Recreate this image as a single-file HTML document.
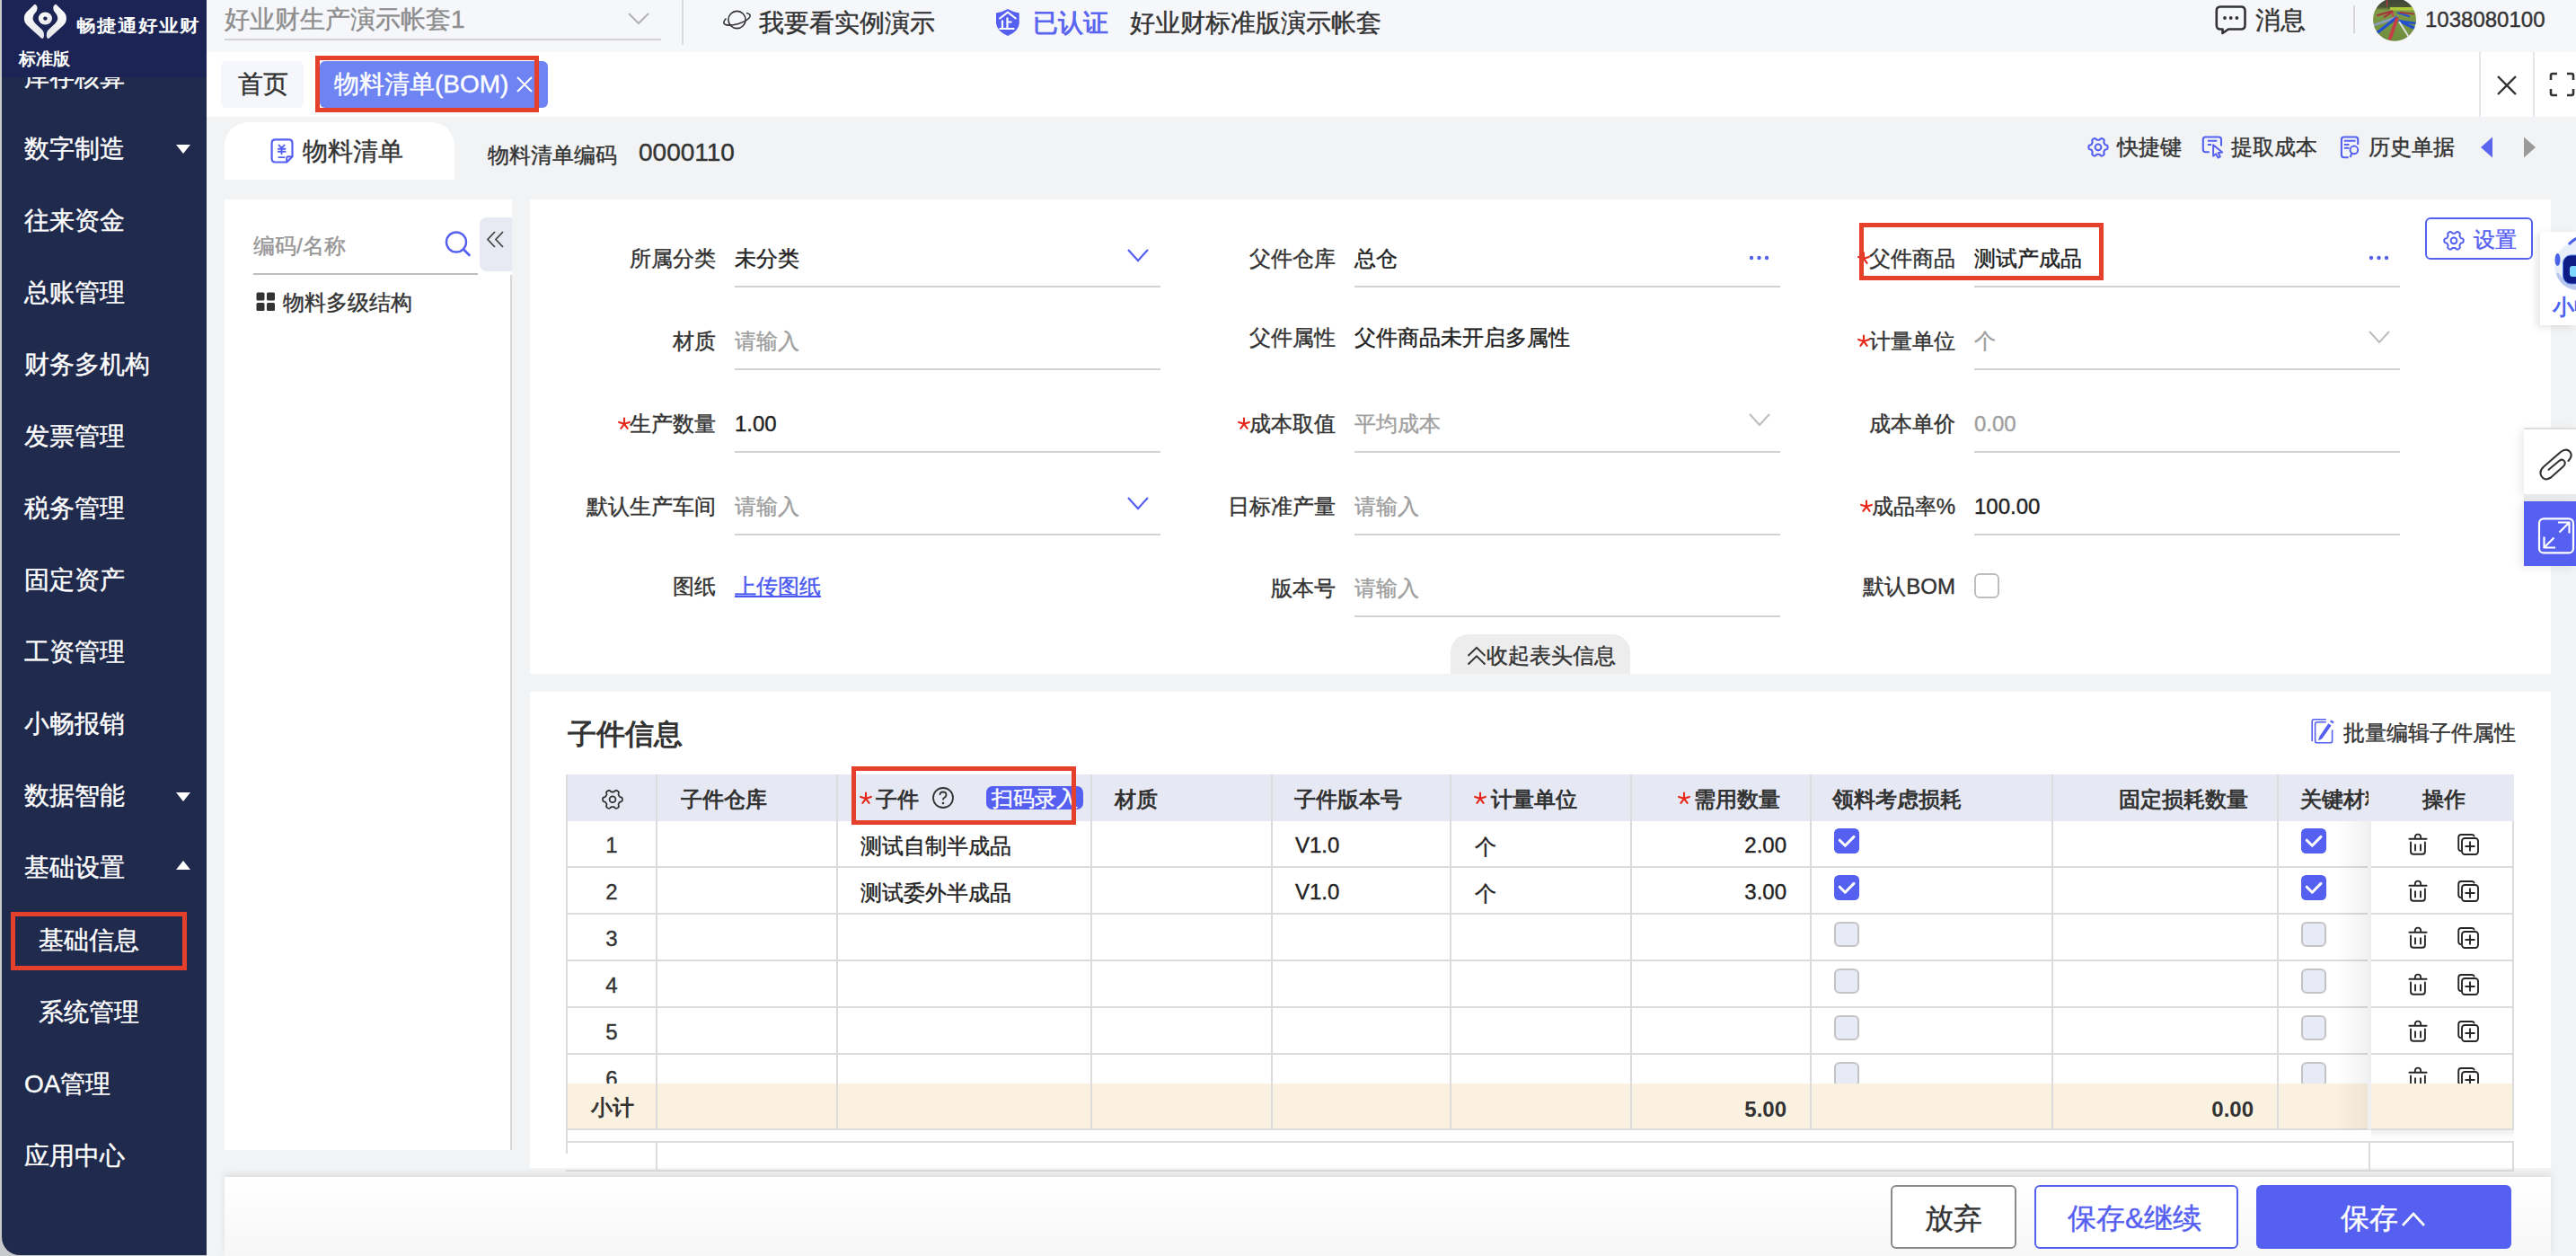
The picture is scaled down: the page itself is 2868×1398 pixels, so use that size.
<!DOCTYPE html>
<html><head><meta charset="utf-8">
<style>
*{box-sizing:border-box}
html,body{margin:0;padding:0}
body{width:2868px;height:1398px;position:relative;overflow:hidden;background:#F2F3F5;font-family:"Liberation Sans",sans-serif;color:#333;font-weight:500;-webkit-text-stroke:0.4px currentColor}
.a{position:absolute}
.t{position:absolute;white-space:nowrap;line-height:1}
.f24{font-size:24px}
[style*="font-weight:bold"]{-webkit-text-stroke:0}.f28{font-size:28px}.f32{font-size:32px}
#side{left:2px;top:0;width:228px;height:1397px;background:#1F2A4D;border-bottom-left-radius:20px;overflow:hidden}
#sidebg{left:0;top:0;width:230px;height:1398px;background:#C9CACC}
#side .m{position:absolute;left:25px;color:#fff;font-size:28px;line-height:1;white-space:nowrap}
.tri-d{position:absolute;left:194px;width:0;height:0;border-left:8px solid transparent;border-right:8px solid transparent;border-top:10px solid #fff}
.tri-u{position:absolute;left:194px;width:0;height:0;border-left:8px solid transparent;border-right:8px solid transparent;border-bottom:10px solid #fff}
.red{position:absolute;border:5px solid #E5402B}
.lbl{position:absolute;font-size:24px;line-height:1;white-space:nowrap;text-align:right;color:#333}
.req{color:#E8352B}
.st{display:inline-block;vertical-align:top;position:relative;top:4px;margin-right:-2px}
.ul{position:absolute;height:2px;background:#D2D2D2}
.ph{color:#A0A0A0}
.hd{position:absolute;top:878px;font-size:24px;line-height:1;font-weight:bold;color:#333;white-space:nowrap;-webkit-text-stroke:0}
.vl{position:absolute;width:2px;background:#DCDCDC}
.hl{position:absolute;height:2px;background:#DCDCDC}
.cb{position:absolute;width:28px;height:28px;border-radius:6px}
.cbon{background:#5661F2}
.cboff{background:#E8EBF5;border:2px solid #C4C4C8}
</style></head><body>

<!-- SIDEBAR -->
<div id="sidebg" class="a"></div>
<div id="side" class="a">
  <div class="m" style="top:72px">库存核算</div>
  <div class="a" style="left:0;top:0;width:228px;height:86px;background:#1B2454"></div>
  
<svg class="a" style="left:18px;top:0" width="60" height="50" viewBox="0 0 60 50">
 <defs><linearGradient id="lg" x1="0" y1="0" x2="1" y2="1"><stop offset="0" stop-color="#fff"/><stop offset="1" stop-color="#E4E4E8"/></linearGradient></defs>
 <path fill="url(#lg)" d="M18.5 4.8 L9 14 Q6.5 17 6.8 21 Q7 25 10 28 L26 42.5 Q28 43.8 28.8 41 Q29.6 36 27 33.3 L19.2 26 Q16.5 23.2 16.5 20.5 Q16.5 17 19 14.5 Q21.6 12 21.6 9 Q21.2 5.2 18.5 4.8 Z"/>
 <path fill="url(#lg)" transform="translate(60.8,0) scale(-1,1)" d="M18.5 4.8 L9 14 Q6.5 17 6.8 21 Q7 25 10 28 L26 42.5 Q28 43.8 28.8 41 Q29.6 36 27 33.3 L19.2 26 Q16.5 23.2 16.5 20.5 Q16.5 17 19 14.5 Q21.6 12 21.6 9 Q21.2 5.2 18.5 4.8 Z"/>
 <ellipse cx="30.4" cy="20.5" rx="7.6" ry="7.1" fill="url(#lg)"/>
 <circle cx="30.4" cy="20.6" r="2.2" fill="#1B2353"/>
</svg>
<div class="t" style="left:83px;top:19px;font-size:22px;letter-spacing:1px;font-weight:bold;color:#fff;transform:scaleY(0.88);transform-origin:0 0">畅捷通好业财</div>
<div class="t" style="left:19px;top:56px;font-size:19px;font-weight:bold;color:#fff">标准版</div>
<div class="m" style="top:152px">数字制造</div><div class="tri-d" style="top:161px"></div>
  <div class="m" style="top:232px">往来资金</div>
  <div class="m" style="top:312px">总账管理</div>
  <div class="m" style="top:392px">财务多机构</div>
  <div class="m" style="top:472px">发票管理</div>
  <div class="m" style="top:552px">税务管理</div>
  <div class="m" style="top:632px">固定资产</div>
  <div class="m" style="top:712px">工资管理</div>
  <div class="m" style="top:792px">小畅报销</div>
  <div class="m" style="top:872px">数据智能</div><div class="tri-d" style="top:882px"></div>
  <div class="m" style="top:952px">基础设置</div><div class="tri-u" style="top:958px"></div>
  <div class="m" style="top:1033px;left:41px">基础信息</div>
  <div class="m" style="top:1113px;left:41px">系统管理</div>
  <div class="m" style="top:1193px">OA管理</div>
  <div class="m" style="top:1273px">应用中心</div>
</div>
<div class="red" style="left:12px;top:1015px;width:196px;height:65px"></div>

<!-- TOPBAR -->
<div class="a" style="left:230px;top:0;width:2638px;height:58px;background:#F6F7FB"></div>
<div class="a" style="left:230px;top:58px;width:2638px;height:72px;background:#fff"></div>


<!-- topbar content -->
<div class="t f28" style="left:250px;top:8px;color:#8E8E8E">好业财生产演示帐套1</div>
<div class="a" style="left:250px;top:43px;width:486px;height:2px;background:#D4D4D6"></div>
<svg class="a" style="left:698px;top:12px" width="28" height="18"><polyline points="2,3 13,14 24,3" fill="none" stroke="#B4B4B4" stroke-width="2"/></svg>
<div class="a" style="left:759px;top:0;width:2px;height:50px;background:#DCDCDE"></div>
<svg class="a" style="left:800px;top:5px" width="40" height="34" viewBox="0 0 40 34">
 <circle cx="20.5" cy="17" r="9.6" fill="none" stroke="#333" stroke-width="1.6"/>
 <path d="M8.5 15.5 Q4 20 7 22 Q11 24.5 22 21.5 Q33 18 35 13.5 Q36 10.5 31 9.5" fill="none" stroke="#333" stroke-width="1.6"/>
</svg>
<div class="t f28" style="left:845px;top:12px;color:#333">我要看实例演示</div>
<svg class="a" style="left:1108px;top:9px" width="28" height="32" viewBox="0 0 28 32">
 <path d="M14 1 Q8 4.5 1 5.6 L1 17 Q2 26 14 31 Q26 26 26.8 17 L26.8 5.6 Q20 4.5 14 1 Z" fill="#5560F0"/>
 <path d="M4.5 12 L14 4.6 L23.5 12" fill="none" stroke="#fff" stroke-width="2"/>
 <path d="M8 13.5 V23 M13.5 10.5 V23 M13.5 15.5 H18.5 M4.5 23 H21.5" fill="none" stroke="#fff" stroke-width="2.2"/>
</svg>
<div class="t f28" style="left:1150px;top:12px;color:#5A66F0;font-weight:bold">已认证</div>
<div class="t f28" style="left:1258px;top:12px;color:#333">好业财标准版演示帐套</div>
<svg class="a" style="left:2466px;top:5px" width="36" height="34" viewBox="0 0 36 34">
 <path d="M6 2.5 H29 Q33.5 2.5 33.5 7 V23 Q33.5 27.5 29 27.5 H15 L8.5 32 L8.5 27.5 H6 Q1.8 27.5 1.8 23 V7 Q1.8 2.5 6 2.5 Z" fill="none" stroke="#333" stroke-width="2.6" stroke-linejoin="round"/>
 <circle cx="11" cy="15" r="1.9" fill="#333"/><circle cx="17.7" cy="15" r="1.9" fill="#333"/><circle cx="24.4" cy="15" r="1.9" fill="#333"/>
</svg>
<div class="t f28" style="left:2511px;top:9px;color:#333">消息</div>
<div class="a" style="left:2620px;top:6px;width:2px;height:31px;background:#D8D8DA"></div>
<svg class="a" style="left:2642px;top:-2px" width="48" height="48" viewBox="0 0 48 48">
 <defs><clipPath id="av"><circle cx="24" cy="23.8" r="24"/></clipPath>
 <linearGradient id="gr" x1="0" y1="0" x2="0" y2="1"><stop offset="0" stop-color="#3E4436"/><stop offset="0.2" stop-color="#4A5236"/><stop offset="0.28" stop-color="#7E9A45"/><stop offset="1" stop-color="#6F8C3E"/></linearGradient></defs>
 <g clip-path="url(#av)">
  <rect width="48" height="48" fill="url(#gr)"/>
  <rect x="19" y="10" width="26" height="3.5" fill="#B7D63A" opacity="0.85"/>
  <path d="M15.5 0 V9" stroke="#B23A3A" stroke-width="1.5"/>
  <path d="M27 21 L1 30" stroke="#8C9CC4" stroke-width="2.6"/>
  <path d="M27 21 L4 39" stroke="#2450D0" stroke-width="3.4"/>
  <path d="M21.9 14.2 L4.4 19.3" stroke="#A8303C" stroke-width="2"/>
  <path d="M22 14.8 L11.9 21.5" stroke="#A8303C" stroke-width="2"/>
  <path d="M27 16 L41 20.5" stroke="#2A55D0" stroke-width="2.2"/>
  <path d="M29.5 15.8 L46 17.6" stroke="#A8303C" stroke-width="1.8"/>
  <path d="M28.7 25.3 L47.8 28" stroke="#2450D0" stroke-width="2.4"/>
  <path d="M28.7 25 L46.5 33.5" stroke="#2450D0" stroke-width="3.2"/>
  <path d="M29 26 L39.5 42.5" stroke="#E2E2E2" stroke-width="2"/>
  <path d="M21.5 15 L22.5 21" stroke="#C8404A" stroke-width="1.6"/>
  <path d="M27 21.5 L18.5 46" stroke="#C83A44" stroke-width="3.6"/>
 </g>
</svg>
<div class="t f24" style="left:2700px;top:10px;color:#333">1038080100</div>

<!-- tabbar -->
<div class="a" style="left:246px;top:68px;width:92px;height:52px;background:#F5F7FC;border-radius:6px"></div>
<div class="t f28" style="left:265px;top:80px;color:#333">首页</div>
<div class="a" style="left:356px;top:68px;width:254px;height:52px;background:#6E84F3;border-radius:6px"></div>
<div class="t f28" style="left:372px;top:80px;color:#fff">物料清单(BOM)</div>
<svg class="a" style="left:574px;top:84px" width="20" height="20"><path d="M2 2 L18 18 M18 2 L2 18" stroke="#fff" stroke-width="2"/></svg>
<div class="red" style="left:351px;top:62px;width:249px;height:63px"></div>
<div class="a" style="left:2760px;top:58px;width:2px;height:72px;background:#E6E6E8"></div>
<svg class="a" style="left:2778px;top:83px" width="26" height="24"><path d="M3 2 L23 22 M23 2 L3 22" stroke="#333" stroke-width="2.4"/></svg>
<div class="a" style="left:2820px;top:58px;width:2px;height:72px;background:#E6E6E8"></div>
<svg class="a" style="left:2838px;top:80px" width="30" height="28"><path d="M2 9 V4 Q2 2 4 2 H9 M20 2 H25 Q27 2 27 4 V9 M27 19 V24 Q27 26 25 26 H20 M9 26 H4 Q2 26 2 24 V19" fill="none" stroke="#333" stroke-width="2.6"/></svg>


<!-- title row -->
<div class="a" style="left:250px;top:136px;width:256px;height:64px;background:#fff;border-radius:26px 26px 0 0"></div>
<svg class="a" style="left:300px;top:153px" width="28" height="30" viewBox="0 0 28 30">
 <path d="M6.6 2.4 H21.5 Q25.5 2.4 25.5 6.4 V21.2 L19.3 27.5 H6.6 Q2.6 27.5 2.6 23.5 V6.4 Q2.6 2.4 6.6 2.4 Z" fill="none" stroke="#5560F0" stroke-width="2.2" stroke-linejoin="round"/>
 <path d="M19.2 27.3 V23.2 Q19.2 21.3 21.1 21.3 H25.3" fill="none" stroke="#5560F0" stroke-width="2"/>
 <path d="M10.6 8.6 L13.5 11.6 L16.6 8.6 M13.5 11.6 V18.2 M9.8 12.8 H17.6 M9.8 15.7 H17.6 M10.3 22.1 H16.6" fill="none" stroke="#5560F0" stroke-width="1.9" stroke-linecap="round"/>
</svg>
<div class="t f28" style="left:337px;top:155px;color:#333">物料清单</div>
<div class="t f24" style="left:543px;top:161px;color:#333">物料清单编码</div>
<div class="t f28" style="left:711px;top:156px;color:#333">0000110</div>

<svg class="a" style="left:2322px;top:151px" width="28" height="26" viewBox="0 0 28 26"><path d="M24.60 12.80 L24.58 13.35 L24.50 13.90 L24.32 14.43 L23.87 14.90 L22.98 15.21 L22.10 15.43 L21.61 15.72 L21.35 16.07 L21.13 16.44 L20.93 16.80 L20.72 17.16 L20.51 17.53 L20.34 17.93 L20.33 18.50 L20.58 19.38 L20.75 20.30 L20.57 20.92 L20.21 21.34 L19.77 21.68 L19.30 21.98 L18.81 22.24 L18.29 22.45 L17.74 22.55 L17.12 22.39 L16.41 21.78 L15.77 21.13 L15.28 20.85 L14.84 20.80 L14.42 20.80 L14.00 20.80 L13.58 20.80 L13.16 20.80 L12.72 20.85 L12.23 21.13 L11.59 21.78 L10.88 22.39 L10.26 22.55 L9.71 22.45 L9.19 22.24 L8.70 21.98 L8.23 21.68 L7.79 21.34 L7.43 20.92 L7.25 20.30 L7.42 19.38 L7.67 18.50 L7.66 17.93 L7.49 17.53 L7.28 17.16 L7.07 16.80 L6.87 16.44 L6.65 16.07 L6.39 15.72 L5.90 15.43 L5.02 15.21 L4.13 14.90 L3.68 14.43 L3.50 13.90 L3.42 13.35 L3.40 12.80 L3.42 12.25 L3.50 11.70 L3.68 11.17 L4.13 10.70 L5.02 10.39 L5.90 10.17 L6.39 9.88 L6.65 9.53 L6.87 9.16 L7.07 8.80 L7.28 8.44 L7.49 8.07 L7.66 7.67 L7.67 7.10 L7.42 6.22 L7.25 5.30 L7.43 4.68 L7.79 4.26 L8.23 3.92 L8.70 3.62 L9.19 3.36 L9.71 3.15 L10.26 3.05 L10.88 3.21 L11.59 3.82 L12.23 4.47 L12.72 4.75 L13.16 4.80 L13.58 4.80 L14.00 4.80 L14.42 4.80 L14.84 4.80 L15.28 4.75 L15.77 4.47 L16.41 3.82 L17.12 3.21 L17.74 3.05 L18.29 3.15 L18.81 3.36 L19.30 3.62 L19.77 3.92 L20.21 4.26 L20.57 4.68 L20.75 5.30 L20.58 6.22 L20.33 7.10 L20.34 7.67 L20.51 8.07 L20.72 8.44 L20.93 8.80 L21.13 9.16 L21.35 9.53 L21.61 9.88 L22.10 10.17 L22.98 10.39 L23.87 10.70 L24.32 11.17 L24.50 11.70 L24.58 12.25 Z" fill="none" stroke="#5560F0" stroke-width="2.1" stroke-linejoin="round"/><circle cx="14" cy="12.8" r="3.4" fill="none" stroke="#5560F0" stroke-width="2"/></svg>
<div class="t f24" style="left:2357px;top:152px;color:#333">快捷键</div>
<svg class="a" style="left:2450px;top:151px" width="28" height="28" viewBox="0 0 28 28">
 <path d="M9.8 18.2 H5.5 Q2.8 18.2 2.8 15.5 V4.2 Q2.8 1.5 5.5 1.5 H20.3 Q23 1.5 23 4.2 V11.5" fill="none" stroke="#5560F0" stroke-width="2.1"/>
 <path d="M7.9 5.8 H18.3 M7.9 10 H12" stroke="#5560F0" stroke-width="2"/>
 <path d="M14.1 10.2 L14.1 22.8 L17.2 20.2 L19.5 24.6 L21.9 23.4 L19.7 19 L24.2 18.6 Z" fill="none" stroke="#5560F0" stroke-width="1.9" stroke-linejoin="round"/>
</svg>
<div class="t f24" style="left:2484px;top:152px;color:#333">提取成本</div>
<svg class="a" style="left:2603px;top:151px" width="28" height="28" viewBox="0 0 28 28">
 <path d="M11.7 24.2 H6.6 Q3.9 24.2 3.9 21.5 V4.2 Q3.9 1.5 6.6 1.5 H19.5 Q22.2 1.5 22.2 4.2 V10" fill="none" stroke="#5560F0" stroke-width="2.1"/>
 <path d="M6.8 5.8 H19.5 M6.8 10 H12.5 M6.8 13.8 H12.5" stroke="#5560F0" stroke-width="2"/>
 <circle cx="17.9" cy="15.9" r="4.3" fill="none" stroke="#5560F0" stroke-width="2"/>
 <path d="M15.4 19.6 L13.6 24" stroke="#5560F0" stroke-width="2.1"/>
</svg>
<div class="t f24" style="left:2637px;top:152px;color:#333">历史单据</div>
<svg class="a" style="left:2760px;top:151px" width="18" height="26"><path d="M15 1.5 V24.5 L2 13 Z" fill="#5A66F0"/></svg>
<svg class="a" style="left:2808px;top:151px" width="18" height="26"><path d="M2 1.5 V24.5 L15 13 Z" fill="#9A9A9A"/></svg>

<!-- tree panel -->
<div class="a" style="left:250px;top:222px;width:320px;height:1058px;background:#fff"></div>
<div class="t f24" style="left:282px;top:262px;color:#969696">编码/名称</div>
<svg class="a" style="left:494px;top:256px" width="32" height="32" viewBox="0 0 32 32">
 <circle cx="14" cy="13.5" r="11" fill="none" stroke="#5560F0" stroke-width="2.4"/>
 <path d="M22 21.5 L28.5 28" stroke="#5560F0" stroke-width="2.6" stroke-linecap="round"/>
</svg>
<div class="a" style="left:282px;top:304px;width:250px;height:2px;background:#BDBDBD"></div>
<div class="a" style="left:534px;top:242px;width:36px;height:60px;background:#E8EAF3;border-radius:8px 0 0 8px"></div>
<svg class="a" style="left:540px;top:255px" width="24" height="26" viewBox="0 0 24 26">
 <path d="M11 3 L3 11.5 L11 20 M20 3 L12 11.5 L20 20" fill="none" stroke="#444" stroke-width="1.8"/>
</svg>
<div class="a" style="left:568px;top:306px;width:2px;height:974px;background:#D8D8D8"></div>
<svg class="a" style="left:285px;top:325px" width="22" height="22"><rect x="0.5" y="0.5" width="9" height="9" rx="1.5" fill="#333"/><rect x="12" y="0.5" width="9" height="9" rx="1.5" fill="#333"/><rect x="0.5" y="12" width="9" height="9" rx="1.5" fill="#333"/><rect x="12" y="12" width="9" height="9" rx="1.5" fill="#333"/></svg>
<div class="t f24" style="left:315px;top:325px;color:#333">物料多级结构</div>

<!-- form panel -->
<div class="a" style="left:590px;top:222px;width:2250px;height:528px;background:#fff"></div>
<div class="lbl" style="right:2071px;top:276px">所属分类</div>
<div class="t f24" style="left:818px;top:276px;color:#222">未分类</div>
<div class="ul" style="left:818px;top:318px;width:474px"></div>
<svg class="a" style="left:1254px;top:276px" width="28" height="18"><polyline points="2,2 13,14 24,2" fill="none" stroke="#5560F0" stroke-width="2.2"/></svg>
<div class="lbl" style="right:2071px;top:368px">材质</div>
<div class="t f24 ph" style="left:818px;top:368px">请输入</div>
<div class="ul" style="left:818px;top:410px;width:474px"></div>
<div class="lbl" style="right:2071px;top:460px"><svg class="st" width="16" height="16" viewBox="0 0 16 16"><path d="M8.00 7.80 L8.00 1.60 M8.00 7.80 L13.90 5.88 M8.00 7.80 L11.64 12.82 M8.00 7.80 L4.36 12.82 M8.00 7.80 L2.10 5.88 " stroke="#E8271A" stroke-width="2.1" stroke-linecap="round"/></svg>生产数量</div>
<div class="t f24" style="left:818px;top:460px;color:#222">1.00</div>
<div class="ul" style="left:818px;top:502px;width:474px"></div>
<div class="lbl" style="right:2071px;top:552px">默认生产车间</div>
<div class="t f24 ph" style="left:818px;top:552px">请输入</div>
<div class="ul" style="left:818px;top:594px;width:474px"></div>
<svg class="a" style="left:1254px;top:552px" width="28" height="18"><polyline points="2,2 13,14 24,2" fill="none" stroke="#5560F0" stroke-width="2.2"/></svg>
<div class="lbl" style="right:2071px;top:641px">图纸</div>
<div class="t f24" style="left:818px;top:641px;color:#4A5AF0;text-decoration:underline">上传图纸</div>
<div class="lbl" style="right:1381px;top:276px">父件仓库</div>
<div class="t f24" style="left:1508px;top:276px;color:#222">总仓</div>
<div class="ul" style="left:1508px;top:318px;width:474px"></div>
<svg class="a" style="left:1947px;top:283px" width="26" height="8"><circle cx="3" cy="4" r="2.2" fill="#5560F0"/><circle cx="11.5" cy="4" r="2.2" fill="#5560F0"/><circle cx="20" cy="4" r="2.2" fill="#5560F0"/></svg>
<div class="lbl" style="right:1381px;top:364px">父件属性</div>
<div class="t f24" style="left:1508px;top:364px;color:#222">父件商品未开启多属性</div>
<div class="lbl" style="right:1381px;top:460px"><svg class="st" width="16" height="16" viewBox="0 0 16 16"><path d="M8.00 7.80 L8.00 1.60 M8.00 7.80 L13.90 5.88 M8.00 7.80 L11.64 12.82 M8.00 7.80 L4.36 12.82 M8.00 7.80 L2.10 5.88 " stroke="#E8271A" stroke-width="2.1" stroke-linecap="round"/></svg>成本取值</div>
<div class="t f24 ph" style="left:1508px;top:460px">平均成本</div>
<div class="ul" style="left:1508px;top:502px;width:474px"></div>
<svg class="a" style="left:1946px;top:459px" width="28" height="18"><polyline points="2,2 13,14 24,2" fill="none" stroke="#BDBDBD" stroke-width="2"/></svg>
<div class="lbl" style="right:1381px;top:552px">日标准产量</div>
<div class="t f24 ph" style="left:1508px;top:552px">请输入</div>
<div class="ul" style="left:1508px;top:594px;width:474px"></div>
<div class="lbl" style="right:1381px;top:643px">版本号</div>
<div class="t f24 ph" style="left:1508px;top:643px">请输入</div>
<div class="ul" style="left:1508px;top:685px;width:474px"></div>
<div class="lbl" style="right:691px;top:276px"><svg class="st" width="16" height="16" viewBox="0 0 16 16"><path d="M8.00 7.80 L8.00 1.60 M8.00 7.80 L13.90 5.88 M8.00 7.80 L11.64 12.82 M8.00 7.80 L4.36 12.82 M8.00 7.80 L2.10 5.88 " stroke="#E8271A" stroke-width="2.1" stroke-linecap="round"/></svg>父件商品</div>
<div class="t f24" style="left:2198px;top:276px;color:#222">测试产成品</div>
<div class="ul" style="left:2198px;top:318px;width:474px"></div>
<svg class="a" style="left:2637px;top:283px" width="26" height="8"><circle cx="3" cy="4" r="2.2" fill="#5560F0"/><circle cx="11.5" cy="4" r="2.2" fill="#5560F0"/><circle cx="20" cy="4" r="2.2" fill="#5560F0"/></svg>
<div class="lbl" style="right:691px;top:368px"><svg class="st" width="16" height="16" viewBox="0 0 16 16"><path d="M8.00 7.80 L8.00 1.60 M8.00 7.80 L13.90 5.88 M8.00 7.80 L11.64 12.82 M8.00 7.80 L4.36 12.82 M8.00 7.80 L2.10 5.88 " stroke="#E8271A" stroke-width="2.1" stroke-linecap="round"/></svg>计量单位</div>
<div class="t f24 ph" style="left:2198px;top:368px">个</div>
<div class="ul" style="left:2198px;top:410px;width:474px"></div>
<svg class="a" style="left:2636px;top:367px" width="28" height="18"><polyline points="2,2 13,14 24,2" fill="none" stroke="#BDBDBD" stroke-width="2"/></svg>
<div class="lbl" style="right:691px;top:460px">成本单价</div>
<div class="t f24 ph" style="left:2198px;top:460px">0.00</div>
<div class="ul" style="left:2198px;top:502px;width:474px"></div>
<div class="lbl" style="right:691px;top:552px"><svg class="st" width="16" height="16" viewBox="0 0 16 16"><path d="M8.00 7.80 L8.00 1.60 M8.00 7.80 L13.90 5.88 M8.00 7.80 L11.64 12.82 M8.00 7.80 L4.36 12.82 M8.00 7.80 L2.10 5.88 " stroke="#E8271A" stroke-width="2.1" stroke-linecap="round"/></svg>成品率%</div>
<div class="t f24" style="left:2198px;top:552px;color:#222">100.00</div>
<div class="ul" style="left:2198px;top:594px;width:474px"></div>
<div class="lbl" style="right:691px;top:641px">默认BOM</div>
<div class="cb" style="left:2198px;top:638px;background:#fff;border:2px solid #BDBDBD"></div>

<div class="red" style="left:2070px;top:248px;width:272px;height:64px"></div>
<div class="a" style="left:2700px;top:242px;width:120px;height:47px;border:2px solid #5560F0;border-radius:6px;background:#fff"></div>
<svg class="a" style="left:2718px;top:254px" width="28" height="28" viewBox="0 0 28 28"><path d="M24.70 13.80 L24.68 14.36 L24.60 14.91 L24.42 15.45 L23.97 15.92 L23.08 16.23 L22.19 16.46 L21.71 16.76 L21.44 17.11 L21.22 17.48 L21.01 17.85 L20.80 18.22 L20.59 18.59 L20.41 18.99 L20.40 19.56 L20.65 20.45 L20.82 21.37 L20.64 22.00 L20.26 22.42 L19.82 22.77 L19.35 23.07 L18.85 23.33 L18.34 23.54 L17.78 23.65 L17.15 23.49 L16.43 22.88 L15.79 22.22 L15.29 21.95 L14.85 21.90 L14.42 21.90 L14.00 21.90 L13.58 21.90 L13.15 21.90 L12.71 21.95 L12.21 22.22 L11.57 22.88 L10.85 23.49 L10.22 23.65 L9.66 23.54 L9.15 23.33 L8.65 23.07 L8.18 22.77 L7.74 22.42 L7.36 22.00 L7.18 21.37 L7.35 20.45 L7.60 19.56 L7.59 18.99 L7.41 18.59 L7.20 18.22 L6.99 17.85 L6.78 17.48 L6.56 17.11 L6.29 16.76 L5.81 16.46 L4.92 16.23 L4.03 15.92 L3.58 15.45 L3.40 14.91 L3.32 14.36 L3.30 13.80 L3.32 13.24 L3.40 12.69 L3.58 12.15 L4.03 11.68 L4.92 11.37 L5.81 11.14 L6.29 10.84 L6.56 10.49 L6.78 10.12 L6.99 9.75 L7.20 9.38 L7.41 9.01 L7.59 8.61 L7.60 8.04 L7.35 7.15 L7.18 6.23 L7.36 5.60 L7.74 5.18 L8.18 4.83 L8.65 4.53 L9.15 4.27 L9.66 4.06 L10.22 3.95 L10.85 4.11 L11.57 4.72 L12.21 5.38 L12.71 5.65 L13.15 5.70 L13.58 5.70 L14.00 5.70 L14.42 5.70 L14.85 5.70 L15.29 5.65 L15.79 5.38 L16.43 4.72 L17.15 4.11 L17.78 3.95 L18.34 4.06 L18.85 4.27 L19.35 4.53 L19.82 4.83 L20.26 5.18 L20.64 5.60 L20.82 6.23 L20.65 7.15 L20.40 8.04 L20.41 8.61 L20.59 9.01 L20.80 9.38 L21.01 9.75 L21.22 10.12 L21.44 10.49 L21.71 10.84 L22.19 11.14 L23.08 11.37 L23.97 11.68 L24.42 12.15 L24.60 12.69 L24.68 13.24 Z" fill="none" stroke="#5560F0" stroke-width="2" stroke-linejoin="round"/><circle cx="14" cy="13.8" r="3.4" fill="none" stroke="#5560F0" stroke-width="2"/></svg>
<div class="t f24" style="left:2754px;top:255px;color:#5560F0">设置</div>
<div class="a" style="left:1615px;top:706px;width:200px;height:44px;background:#EDEDEE;border-radius:20px 20px 0 0"></div>
<svg class="a" style="left:1633px;top:719px" width="24" height="24"><path d="M1.5 11 L11 1.8 L20.5 11 M1.5 20.5 L11 11.3 L20.5 20.5" fill="none" stroke="#333" stroke-width="1.9"/></svg>
<div class="t f24" style="left:1655px;top:718px;color:#333">收起表头信息</div>


<!-- table panel -->
<div class="a" style="left:590px;top:770px;width:2250px;height:530px;background:#fff"></div>
<div class="t f32" style="left:632px;top:801px;color:#333;font-weight:bold">子件信息</div>
<svg class="a" style="left:2570px;top:796px" width="32" height="34" viewBox="2570 796 32 34">
 <path d="M2574.2 825 V803 Q2574.2 800.8 2576.4 800.8 H2589.8" fill="none" stroke="#5560F0" stroke-width="1.6"/>
 <path d="M2589.8 803.7 H2580 Q2577.6 803.7 2577.6 806.1 V824.4 Q2577.6 826.8 2580 826.8 H2594.2 Q2596.6 826.8 2596.6 824.4 V812.2" fill="none" stroke="#5560F0" stroke-width="1.6"/>
 <path d="M2592.3 805.2 L2595.6 807.4 L2585.6 821.8 Q2584.5 823.2 2581.2 824.3 Q2581.6 821 2582.6 819.6 Z" fill="#5560F0"/>
 <path d="M2594 803.2 L2595.3 801.4 L2598.6 803.6 L2597.3 805.4 Z" fill="#5560F0"/>
</svg>
<div class="t f24" style="left:2609px;top:804px;color:#333">批量编辑子件属性</div>
<div class="a" style="left:630px;top:862px;width:2169px;height:52px;background:#E6E9F4"></div>
<div class="a" style="left:630px;top:1206px;width:2169px;height:51px;background:#FBF1E0"></div>
<div class="vl" style="left:630px;top:862px;height:422px"></div>
<div class="vl" style="left:730px;top:862px;height:395px"></div>
<div class="vl" style="left:931px;top:862px;height:395px"></div>
<div class="vl" style="left:1214px;top:862px;height:395px"></div>
<div class="vl" style="left:1415px;top:862px;height:395px"></div>
<div class="vl" style="left:1614px;top:862px;height:395px"></div>
<div class="vl" style="left:1815px;top:862px;height:395px"></div>
<div class="vl" style="left:2015px;top:862px;height:395px"></div>
<div class="vl" style="left:2284px;top:862px;height:395px"></div>
<div class="vl" style="left:2535px;top:862px;height:395px"></div>
<div class="hl" style="left:630px;top:964px;width:2169px"></div>
<div class="hl" style="left:630px;top:1016px;width:2169px"></div>
<div class="hl" style="left:630px;top:1068px;width:2169px"></div>
<div class="hl" style="left:630px;top:1120px;width:2169px"></div>
<div class="hl" style="left:630px;top:1172px;width:2169px"></div>
<div class="hl" style="left:630px;top:1256px;width:2169px"></div>
<div class="hl" style="left:630px;top:1270px;width:2169px"></div>
<div class="hl" style="left:630px;top:1302px;width:2169px"></div>
<div class="vl" style="left:730px;top:1270px;height:34px"></div>

<svg class="a" style="left:668px;top:877px" width="28" height="26" viewBox="0 0 28 26"><path d="M24.90 12.80 L24.88 13.37 L24.80 13.94 L24.61 14.48 L24.16 14.96 L23.27 15.28 L22.38 15.52 L21.89 15.83 L21.62 16.19 L21.40 16.57 L21.19 16.95 L20.97 17.32 L20.75 17.70 L20.57 18.12 L20.55 18.70 L20.79 19.59 L20.95 20.52 L20.76 21.15 L20.38 21.58 L19.93 21.94 L19.45 22.24 L18.95 22.51 L18.42 22.72 L17.85 22.83 L17.21 22.68 L16.48 22.07 L15.83 21.42 L15.32 21.15 L14.87 21.10 L14.43 21.10 L14.00 21.10 L13.57 21.10 L13.13 21.10 L12.68 21.15 L12.17 21.42 L11.52 22.07 L10.79 22.68 L10.15 22.83 L9.58 22.72 L9.05 22.51 L8.55 22.24 L8.07 21.94 L7.62 21.58 L7.24 21.15 L7.05 20.52 L7.21 19.59 L7.45 18.70 L7.43 18.12 L7.25 17.70 L7.03 17.32 L6.81 16.95 L6.60 16.57 L6.38 16.19 L6.11 15.83 L5.62 15.52 L4.73 15.28 L3.84 14.96 L3.39 14.48 L3.20 13.94 L3.12 13.37 L3.10 12.80 L3.12 12.23 L3.20 11.66 L3.39 11.12 L3.84 10.64 L4.73 10.32 L5.62 10.08 L6.11 9.77 L6.38 9.41 L6.60 9.03 L6.81 8.65 L7.03 8.28 L7.25 7.90 L7.43 7.48 L7.45 6.90 L7.21 6.01 L7.05 5.08 L7.24 4.45 L7.62 4.02 L8.07 3.66 L8.55 3.36 L9.05 3.09 L9.58 2.88 L10.15 2.77 L10.79 2.92 L11.52 3.53 L12.17 4.18 L12.68 4.45 L13.13 4.50 L13.57 4.50 L14.00 4.50 L14.43 4.50 L14.87 4.50 L15.32 4.45 L15.83 4.18 L16.48 3.53 L17.21 2.92 L17.85 2.77 L18.42 2.88 L18.95 3.09 L19.45 3.36 L19.93 3.66 L20.38 4.02 L20.76 4.45 L20.95 5.08 L20.79 6.01 L20.55 6.90 L20.57 7.48 L20.75 7.90 L20.97 8.28 L21.19 8.65 L21.40 9.03 L21.62 9.41 L21.89 9.77 L22.38 10.08 L23.27 10.32 L24.16 10.64 L24.61 11.12 L24.80 11.66 L24.88 12.23 Z" fill="none" stroke="#333" stroke-width="1.8" stroke-linejoin="round"/><circle cx="14" cy="12.8" r="3.4" fill="none" stroke="#333" stroke-width="1.8"/></svg>
<div class="hd" style="left:758px">子件仓库</div>
<svg class="a" style="left:956px;top:881px" width="16" height="16" viewBox="0 0 16 16"><path d="M8.00 7.80 L8.00 1.60 M8.00 7.80 L13.90 5.88 M8.00 7.80 L11.64 12.82 M8.00 7.80 L4.36 12.82 M8.00 7.80 L2.10 5.88 " stroke="#E8271A" stroke-width="2.1" stroke-linecap="round"/></svg>
<div class="hd" style="left:975px">子件</div>
<svg class="a" style="left:1037px;top:875px" width="26" height="26"><circle cx="13" cy="13" r="11" fill="none" stroke="#333" stroke-width="1.8"/><path d="M9.5 10 Q9.5 6.5 13 6.5 Q16.5 6.5 16.5 9.8 Q16.5 12 13.8 13.2 Q13 13.6 13 15.5" fill="none" stroke="#333" stroke-width="1.8"/><circle cx="13" cy="19" r="1.3" fill="#333"/></svg>
<div class="a" style="left:1098px;top:875px;width:108px;height:26px;background:#5560F0;border-radius:7px"></div>
<div class="t f24" style="left:1104px;top:877px;color:#fff">扫码录入</div>
<div class="red" style="left:948px;top:853px;width:250px;height:65px"></div>
<div class="hd" style="left:1241px">材质</div>
<div class="hd" style="left:1441px">子件版本号</div>
<svg class="a" style="left:1640px;top:881px" width="16" height="16" viewBox="0 0 16 16"><path d="M8.00 7.80 L8.00 1.60 M8.00 7.80 L13.90 5.88 M8.00 7.80 L11.64 12.82 M8.00 7.80 L4.36 12.82 M8.00 7.80 L2.10 5.88 " stroke="#E8271A" stroke-width="2.1" stroke-linecap="round"/></svg>
<div class="hd" style="left:1660px">计量单位</div>
<svg class="a" style="left:1867px;top:881px" width="16" height="16" viewBox="0 0 16 16"><path d="M8.00 7.80 L8.00 1.60 M8.00 7.80 L13.90 5.88 M8.00 7.80 L11.64 12.82 M8.00 7.80 L4.36 12.82 M8.00 7.80 L2.10 5.88 " stroke="#E8271A" stroke-width="2.1" stroke-linecap="round"/></svg>
<div class="hd" style="left:1886px">需用数量</div>
<div class="hd" style="left:2040px">领料考虑损耗</div>
<div class="hd" style="left:2359px">固定损耗数量</div>
<div class="a" style="left:2537px;top:862px;width:100px;height:52px;overflow:hidden"><div class="hd" style="left:24px;top:16px">关键材料</div></div>
<div class="t f24" style="left:673px;top:929px;color:#333;width:16px;text-align:center">1</div>
<div class="t f24" style="left:673px;top:981px;color:#333;width:16px;text-align:center">2</div>
<div class="t f24" style="left:673px;top:1033px;color:#333;width:16px;text-align:center">3</div>
<div class="t f24" style="left:673px;top:1085px;color:#333;width:16px;text-align:center">4</div>
<div class="t f24" style="left:673px;top:1137px;color:#333;width:16px;text-align:center">5</div>
<div class="a" style="left:632px;top:1174px;width:98px;height:32px;overflow:hidden"><div class="t f24" style="left:41px;top:15px;color:#333;width:16px;text-align:center">6</div></div>
<div class="t f24" style="left:958px;top:930px;color:#222">测试自制半成品</div>
<div class="t f24" style="left:1442px;top:929px;color:#222">V1.0</div>
<div class="t f24" style="left:1642px;top:931px;color:#222">个</div>
<div class="t f24" style="left:1889px;top:929px;color:#222;width:100px;text-align:right">2.00</div>
<div class="t f24" style="left:958px;top:982px;color:#222">测试委外半成品</div>
<div class="t f24" style="left:1442px;top:981px;color:#222">V1.0</div>
<div class="t f24" style="left:1642px;top:983px;color:#222">个</div>
<div class="t f24" style="left:1889px;top:981px;color:#222;width:100px;text-align:right">3.00</div>
<svg class="a" style="left:2042px;top:922px" width="28" height="28"><rect width="28" height="28" rx="5.5" fill="#5560F0"/><path d="M6.2 13.2 L12.3 19.2 L22 9.4" fill="none" stroke="#fff" stroke-width="3" stroke-linecap="round" stroke-linejoin="round"/></svg>
<svg class="a" style="left:2562px;top:922px" width="28" height="28"><rect width="28" height="28" rx="5.5" fill="#5560F0"/><path d="M6.2 13.2 L12.3 19.2 L22 9.4" fill="none" stroke="#fff" stroke-width="3" stroke-linecap="round" stroke-linejoin="round"/></svg>
<svg class="a" style="left:2042px;top:974px" width="28" height="28"><rect width="28" height="28" rx="5.5" fill="#5560F0"/><path d="M6.2 13.2 L12.3 19.2 L22 9.4" fill="none" stroke="#fff" stroke-width="3" stroke-linecap="round" stroke-linejoin="round"/></svg>
<svg class="a" style="left:2562px;top:974px" width="28" height="28"><rect width="28" height="28" rx="5.5" fill="#5560F0"/><path d="M6.2 13.2 L12.3 19.2 L22 9.4" fill="none" stroke="#fff" stroke-width="3" stroke-linecap="round" stroke-linejoin="round"/></svg>
<div class="cb cboff" style="left:2042px;top:1026px"></div>
<div class="cb cboff" style="left:2562px;top:1026px"></div>
<div class="cb cboff" style="left:2042px;top:1078px"></div>
<div class="cb cboff" style="left:2562px;top:1078px"></div>
<div class="cb cboff" style="left:2042px;top:1130px"></div>
<div class="cb cboff" style="left:2562px;top:1130px"></div>
<div class="a" style="left:2040px;top:1174px;width:40px;height:32px;overflow:hidden"><div class="cb cboff" style="left:2px;top:8px"></div>
</div>
<div class="a" style="left:2560px;top:1174px;width:40px;height:32px;overflow:hidden"><div class="cb cboff" style="left:2px;top:8px"></div>
</div>

<div class="t f24" style="left:658px;top:1221px;color:#333;font-weight:bold">小计</div>
<div class="t f24" style="left:1889px;top:1223px;color:#333;font-weight:bold;width:100px;text-align:right">5.00</div>
<div class="t f24" style="left:2409px;top:1223px;color:#333;font-weight:bold;width:100px;text-align:right">0.00</div>
<!-- fixed op column -->
<div class="a" style="left:2600px;top:914px;width:36px;height:343px;background:linear-gradient(90deg,rgba(0,0,0,0) 0,rgba(0,0,0,0.05) 100%)"></div>
<div class="a" style="left:2636px;top:914px;width:4px;height:343px;background:#EFEFF1"></div>
<div class="a" style="left:2640px;top:1257px;width:159px;height:10px;background:linear-gradient(rgba(0,0,0,0.07),rgba(0,0,0,0))"></div>
<div class="a" style="left:2637px;top:862px;width:162px;height:52px;background:#E6E9F4"></div>
<div class="a" style="left:2640px;top:914px;width:159px;height:292px;background:#fff"></div>
<div class="a" style="left:2640px;top:1206px;width:159px;height:51px;background:#FBF1E0"></div>
<div class="hd" style="left:2697px">操作</div>
<div class="vl" style="left:2797px;top:914px;height:343px"></div>
<div class="vl" style="left:2637px;top:1270px;height:34px"></div>
<div class="hl" style="left:2640px;top:964px;width:159px"></div>
<div class="hl" style="left:2640px;top:1016px;width:159px"></div>
<div class="hl" style="left:2640px;top:1068px;width:159px"></div>
<div class="hl" style="left:2640px;top:1120px;width:159px"></div>
<div class="hl" style="left:2640px;top:1172px;width:159px"></div>
<div class="hl" style="left:2640px;top:1256px;width:159px"></div>
<div class="vl" style="left:2797px;top:1270px;height:34px"></div>
<svg class="a" style="left:2680px;top:927px" width="24" height="26" viewBox="0 0 24 26"><path d="M2.4 6.8 H21.6 M8.8 6.8 V5.3 Q8.8 1.6 12 1.6 Q15.2 1.6 15.2 5.3 V6.8 M4 10.5 V20.7 Q4 23.7 7 23.7 H16.9 Q19.9 23.7 19.9 20.7 V10.5 M9 13.2 V19.6 M15 13.2 V19.6" fill="none" stroke="#262626" stroke-width="1.9" stroke-linecap="round"/></svg>
<svg class="a" style="left:2735px;top:927px" width="26" height="26" viewBox="0 0 26 26"><path d="M4.3 20 Q2.2 19.5 2.2 17 V5 Q2.2 2 5.2 2 H17 Q19 2 19.6 3.6" fill="none" stroke="#262626" stroke-width="1.9" stroke-linecap="round"/><rect x="6" y="6" width="18" height="18" rx="3.2" fill="none" stroke="#262626" stroke-width="1.9"/><path d="M15 10.2 V19.8 M10.2 15 H19.8" stroke="#262626" stroke-width="1.9" stroke-linecap="round"/></svg>
<svg class="a" style="left:2680px;top:979px" width="24" height="26" viewBox="0 0 24 26"><path d="M2.4 6.8 H21.6 M8.8 6.8 V5.3 Q8.8 1.6 12 1.6 Q15.2 1.6 15.2 5.3 V6.8 M4 10.5 V20.7 Q4 23.7 7 23.7 H16.9 Q19.9 23.7 19.9 20.7 V10.5 M9 13.2 V19.6 M15 13.2 V19.6" fill="none" stroke="#262626" stroke-width="1.9" stroke-linecap="round"/></svg>
<svg class="a" style="left:2735px;top:979px" width="26" height="26" viewBox="0 0 26 26"><path d="M4.3 20 Q2.2 19.5 2.2 17 V5 Q2.2 2 5.2 2 H17 Q19 2 19.6 3.6" fill="none" stroke="#262626" stroke-width="1.9" stroke-linecap="round"/><rect x="6" y="6" width="18" height="18" rx="3.2" fill="none" stroke="#262626" stroke-width="1.9"/><path d="M15 10.2 V19.8 M10.2 15 H19.8" stroke="#262626" stroke-width="1.9" stroke-linecap="round"/></svg>
<svg class="a" style="left:2680px;top:1031px" width="24" height="26" viewBox="0 0 24 26"><path d="M2.4 6.8 H21.6 M8.8 6.8 V5.3 Q8.8 1.6 12 1.6 Q15.2 1.6 15.2 5.3 V6.8 M4 10.5 V20.7 Q4 23.7 7 23.7 H16.9 Q19.9 23.7 19.9 20.7 V10.5 M9 13.2 V19.6 M15 13.2 V19.6" fill="none" stroke="#262626" stroke-width="1.9" stroke-linecap="round"/></svg>
<svg class="a" style="left:2735px;top:1031px" width="26" height="26" viewBox="0 0 26 26"><path d="M4.3 20 Q2.2 19.5 2.2 17 V5 Q2.2 2 5.2 2 H17 Q19 2 19.6 3.6" fill="none" stroke="#262626" stroke-width="1.9" stroke-linecap="round"/><rect x="6" y="6" width="18" height="18" rx="3.2" fill="none" stroke="#262626" stroke-width="1.9"/><path d="M15 10.2 V19.8 M10.2 15 H19.8" stroke="#262626" stroke-width="1.9" stroke-linecap="round"/></svg>
<svg class="a" style="left:2680px;top:1083px" width="24" height="26" viewBox="0 0 24 26"><path d="M2.4 6.8 H21.6 M8.8 6.8 V5.3 Q8.8 1.6 12 1.6 Q15.2 1.6 15.2 5.3 V6.8 M4 10.5 V20.7 Q4 23.7 7 23.7 H16.9 Q19.9 23.7 19.9 20.7 V10.5 M9 13.2 V19.6 M15 13.2 V19.6" fill="none" stroke="#262626" stroke-width="1.9" stroke-linecap="round"/></svg>
<svg class="a" style="left:2735px;top:1083px" width="26" height="26" viewBox="0 0 26 26"><path d="M4.3 20 Q2.2 19.5 2.2 17 V5 Q2.2 2 5.2 2 H17 Q19 2 19.6 3.6" fill="none" stroke="#262626" stroke-width="1.9" stroke-linecap="round"/><rect x="6" y="6" width="18" height="18" rx="3.2" fill="none" stroke="#262626" stroke-width="1.9"/><path d="M15 10.2 V19.8 M10.2 15 H19.8" stroke="#262626" stroke-width="1.9" stroke-linecap="round"/></svg>
<svg class="a" style="left:2680px;top:1135px" width="24" height="26" viewBox="0 0 24 26"><path d="M2.4 6.8 H21.6 M8.8 6.8 V5.3 Q8.8 1.6 12 1.6 Q15.2 1.6 15.2 5.3 V6.8 M4 10.5 V20.7 Q4 23.7 7 23.7 H16.9 Q19.9 23.7 19.9 20.7 V10.5 M9 13.2 V19.6 M15 13.2 V19.6" fill="none" stroke="#262626" stroke-width="1.9" stroke-linecap="round"/></svg>
<svg class="a" style="left:2735px;top:1135px" width="26" height="26" viewBox="0 0 26 26"><path d="M4.3 20 Q2.2 19.5 2.2 17 V5 Q2.2 2 5.2 2 H17 Q19 2 19.6 3.6" fill="none" stroke="#262626" stroke-width="1.9" stroke-linecap="round"/><rect x="6" y="6" width="18" height="18" rx="3.2" fill="none" stroke="#262626" stroke-width="1.9"/><path d="M15 10.2 V19.8 M10.2 15 H19.8" stroke="#262626" stroke-width="1.9" stroke-linecap="round"/></svg>
<div class="a" style="left:2670px;top:1174px;width:100px;height:32px;overflow:hidden"><svg class="a" style="left:10px;top:13px" width="24" height="26" viewBox="0 0 24 26"><path d="M2.4 6.8 H21.6 M8.8 6.8 V5.3 Q8.8 1.6 12 1.6 Q15.2 1.6 15.2 5.3 V6.8 M4 10.5 V20.7 Q4 23.7 7 23.7 H16.9 Q19.9 23.7 19.9 20.7 V10.5 M9 13.2 V19.6 M15 13.2 V19.6" fill="none" stroke="#262626" stroke-width="1.9" stroke-linecap="round"/></svg>
<svg class="a" style="left:65px;top:13px" width="26" height="26" viewBox="0 0 26 26"><path d="M4.3 20 Q2.2 19.5 2.2 17 V5 Q2.2 2 5.2 2 H17 Q19 2 19.6 3.6" fill="none" stroke="#262626" stroke-width="1.9" stroke-linecap="round"/><rect x="6" y="6" width="18" height="18" rx="3.2" fill="none" stroke="#262626" stroke-width="1.9"/><path d="M15 10.2 V19.8 M10.2 15 H19.8" stroke="#262626" stroke-width="1.9" stroke-linecap="round"/></svg>
</div>

<!-- footer -->
<div class="a" style="left:250px;top:1310px;width:2590px;height:88px;background:linear-gradient(#fff,#F7F7F8);box-shadow:0 -4px 8px rgba(0,0,0,0.08)"></div>
<div class="a" style="left:2105px;top:1319px;width:140px;height:71px;border:2px solid #8A8A8A;border-radius:6px;background:#fff"></div>
<div class="t f32" style="left:2143px;top:1340px;color:#333">放弃</div>
<div class="a" style="left:2265px;top:1319px;width:227px;height:71px;border:2px solid #5560F0;border-radius:6px;background:#fff"></div>
<div class="t f32" style="left:2302px;top:1340px;color:#5560F0">保存&amp;继续</div>
<div class="a" style="left:2512px;top:1319px;width:284px;height:71px;border-radius:6px;background:#5560F0"></div>
<div class="t f32" style="left:2606px;top:1340px;color:#fff">保存</div>
<svg class="a" style="left:2672px;top:1342px" width="30" height="28"><polyline points="3,22 15,9 27,22" fill="none" stroke="#fff" stroke-width="2.6"/></svg>

<!-- right floaters -->
<div class="a" style="left:2828px;top:258px;width:40px;height:104px;background:#fff;box-shadow:-4px 2px 8px rgba(0,0,0,0.10)"></div>
<svg class="a" style="left:2840px;top:262px" width="28" height="66" viewBox="2840 262 28 66">
 <ellipse cx="2870" cy="296" rx="26" ry="27" fill="#E9EEFB"/>
 <path d="M2846 305 Q2852 322 2870 323 L2870 318 Q2855 316 2848 303 Z" fill="#B9C6EE"/>
 <ellipse cx="2847.5" cy="289" rx="3" ry="7" fill="#4B63E8"/>
 <rect x="2853.5" y="284" width="30" height="32" rx="9" fill="#0D1C86" stroke="#4E7BEA" stroke-width="1"/>
 <rect x="2861" y="296" width="10" height="12" rx="3" fill="#7FD6FF"/>
 <path d="M2860 272 Q2866 266 2870 265" fill="none" stroke="#4B63E8" stroke-width="3"/>
</svg>
<div class="t f24" style="left:2842px;top:330px;color:#4B63F0;font-weight:bold">小畅</div>
<div class="a" style="left:2810px;top:476px;width:58px;height:74px;background:#fff;border-top:2px solid #DEDEE0;box-shadow:-4px 2px 10px rgba(0,0,0,0.08)"></div>
<svg class="a" style="left:2820px;top:490px" width="48" height="52" viewBox="2820 490 48 52">
 <path d="M2837.5 522.8 L2849.5 512.8 Q2853.5 510 2855.5 514 Q2856.5 517 2853.5 519.5 L2840 531.5 Q2833 536 2829.5 530 Q2826.5 524.5 2832 519.5 L2851 503 Q2857 498.5 2861 502.5 Q2865 507 2859.5 513" fill="none" stroke="#333" stroke-width="2.1" stroke-linecap="round" stroke-linejoin="round"/>
</svg>
<div class="a" style="left:2810px;top:550px;width:58px;height:8px;background:#E9EAEC"></div>
<div class="a" style="left:2810px;top:558px;width:58px;height:72px;background:#5560F0;box-shadow:-4px 2px 10px rgba(0,0,0,0.08)"></div>
<svg class="a" style="left:2820px;top:570px" width="48" height="52" viewBox="2820 570 48 52">
 <rect x="2827" y="577.4" width="38" height="38" rx="5" fill="none" stroke="#fff" stroke-width="2.2"/>
 <path d="M2849.5 592.5 L2860.5 581.5 M2848 581.5 H2860.5 V593.5 M2843.5 598.5 L2832.5 609.5 M2832.5 597.5 V609.5 H2845" fill="none" stroke="#fff" stroke-width="2.2"/>
</svg>
</body></html>
